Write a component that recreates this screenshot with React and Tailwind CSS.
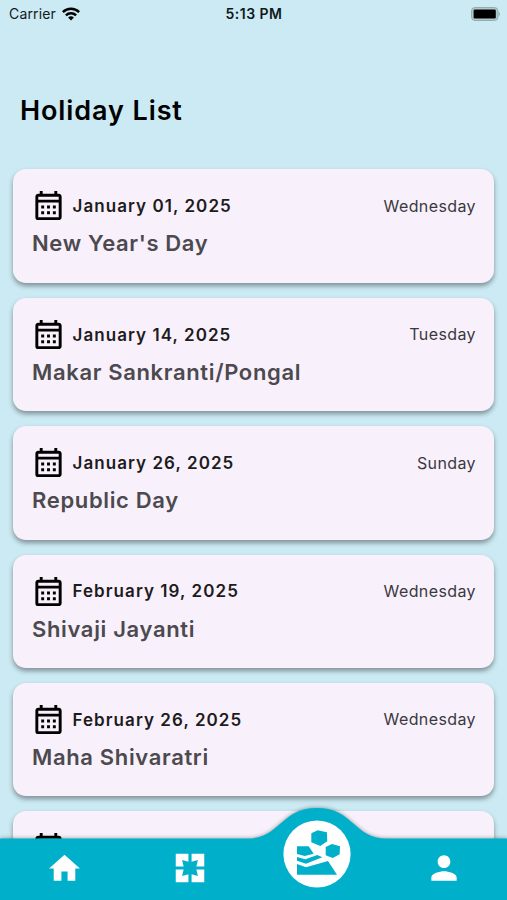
import { MdOutlineCalendarMonth, MdPerson } from "react-icons/md";

const holidays = [
  { date: "January 01, 2025", day: "Wednesday", name: "New Year's Day" },
  { date: "January 14, 2025", day: "Tuesday", name: "Makar Sankranti/Pongal" },
  { date: "January 26, 2025", day: "Sunday", name: "Republic Day" },
  { date: "February 19, 2025", day: "Wednesday", name: "Shivaji Jayanti" },
  { date: "February 26, 2025", day: "Wednesday", name: "Maha Shivaratri" },
  { date: "March 14, 2025", day: "Friday", name: "Holi" }
];

const StatusBar = () => (
  <div className="grid h-[27px] shrink-0 grid-cols-3 items-center pr-[6px] pl-[9px] text-[14px] text-[#10191c]">
    <div className="flex items-center gap-[6px]">
      <span className="tracking-[0.15px]">Carrier</span>
      <svg viewBox="0 0 18 14" className="h-[14px] w-[18px]" fill="none" stroke="black" strokeWidth="2.5">
        <path d="M0.9 5.2a11.5 11.5 0 0 1 16.2 0" />
        <path d="M3.9 8.3a7.2 7.2 0 0 1 10.2 0" />
        <path d="M9 13.6l-2.9-3a4.1 4.1 0 0 1 5.8 0z" fill="black" stroke="none" />
      </svg>
    </div>
    <span className="-ml-[2px] text-center font-semibold tracking-[0.5px]">5:13 PM</span>
    <svg viewBox="0 0 30 14" className="h-[14px] w-[30px] justify-self-end">
      <rect x="0.5" y="0.5" width="26.5" height="13" rx="3.6" fill="#b0c9cc" stroke="#94acaf" />
      <rect x="2.6" y="2.4" width="22.2" height="9.2" rx="1.4" fill="black" />
      <path d="M27.6 4.8a2.5 2.5 0 0 1 0 4.4z" fill="#8ea5a8" />
    </svg>
  </div>
);

const HolidayCard = ({ date, day, name }) => (
  <li className="h-[113.4px] shrink-0 rounded-[13px] bg-[#f8f1fb] pt-[19px] pr-[18px] pl-[18px] shadow-[0_3px_5px_rgba(0,0,0,0.38)]">
    <div className="flex h-[35px] items-center">
      <MdOutlineCalendarMonth className="h-[35px] w-[35px] text-black" />
      <span className="ml-[6.5px] pt-[2px] text-[17px] font-semibold tracking-[1.06px] text-[#1d1b20]">{date}</span>
      <span className="ml-auto text-[16px] tracking-[0.4px] text-[#3b383f]">{day}</span>
    </div>
    <h2 className="mt-[5px] ml-px text-[22px] leading-[30px] font-semibold tracking-[0.65px] text-[#4c494f]">{name}</h2>
  </li>
);

const Logo = () => (
  <svg viewBox="0 0 68 68" className="h-[68px] w-[68px]">
    <circle cx="34" cy="34" r="33.6" fill="white" />
    <g fill="#00b0cb">
      <path d="M34.7 10.3L43.9 12.2 44.3 21.3 37.3 26 28.3 22.3V13.3z" />
      <path d="M49 24L57 26.3 56.7 34.3 49.7 38 42.7 35.3V27z" />
      <path d="M14 26.3H25.7L30.7 33.7 21.7 36 14 34z" />
      <path d="M14 37L22.3 39.3 34.3 35 39.3 37.3 23 43.7 14 40.7z" />
      <path d="M14 44L23 47.3 45 41 54 54.7H14z" />
    </g>
  </svg>
);

const BottomNav = () => (
  <nav className="absolute inset-x-0 bottom-0 h-[93px]">
    <svg viewBox="0 0 507 93" className="absolute inset-0 h-[93px] w-[507px] drop-shadow-[0_0_2px_rgba(0,0,0,0.4)]">
      <path d="M0 31.5H247C281 31.5 280 1 317 1S353 31.5 387 31.5H507V93H0z" fill="#00b0cb" />
    </svg>
    <div className="relative grid h-full grid-cols-4 items-end justify-items-center text-white">
      <button type="button" aria-label="Home" className="mb-[13px] pl-[2px]">
        <svg viewBox="0 0 24 24" className="h-[37px] w-[37px]" fill="currentColor">
          <path d="M10 20v-6h4v6h5v-8h3L12 3 2 12h3v8z" />
        </svg>
      </button>
      <button type="button" aria-label="Pages" className="mb-[13px]">
        <svg viewBox="0 0 24 24" className="h-[38px] w-[38px]" fill="currentColor">
          <path d="M3 3v8h5L7 7l4 1V3zM8 13H3v8h8v-5l-4 1zM17 17l-4-1v5h8v-8h-5zM21 3h-8v5l4-1-1 4h5z" />
        </svg>
      </button>
      <button type="button" aria-label="Dashboard" className="mb-[12px]">
        <Logo />
      </button>
      <button type="button" aria-label="Profile" className="mb-[13px]">
        <MdPerson className="h-[38px] w-[38px]" />
      </button>
    </div>
  </nav>
);

const App = () => (
  <div className="relative flex h-[900px] w-[507px] flex-col overflow-hidden bg-[#cceaf3] font-['Inter',sans-serif]">
    <StatusBar />
    <h1 className="mt-[64px] ml-5 text-[27px] leading-[40px] font-semibold tracking-[0.9px] text-black">Holiday List</h1>
    <ul className="mt-[38.4px] flex flex-col gap-[15px] px-[13px]">
      {holidays.map((holiday) => (
        <HolidayCard key={holiday.date} {...holiday} />
      ))}
    </ul>
    <BottomNav />
  </div>
);

export default App;
